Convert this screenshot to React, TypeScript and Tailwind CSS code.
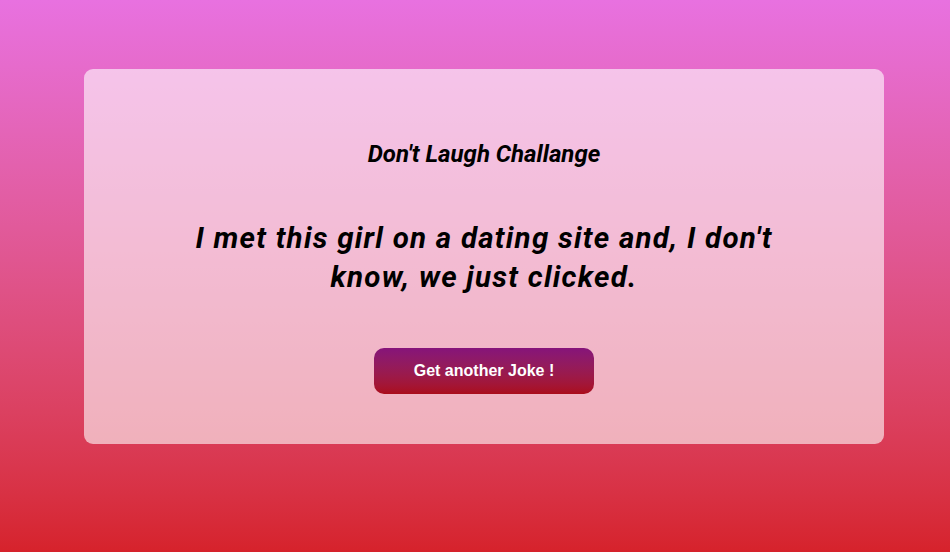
export default function App() {
  return (
    <div className="flex min-h-[552px] w-full items-start justify-start bg-gradient-to-b from-[#e871e0] to-[#d6222b] pl-[84px] pt-[69px] font-['Roboto',sans-serif]">
      <div className="flex h-[375px] w-[800px] flex-col items-center rounded-[9px] bg-white/60 px-[100px] pt-[71px]">
        <h2 className="text-[24px] font-bold italic leading-[28px] text-black">
          Don't Laugh Challange
        </h2>
        <p className="mt-[51px] text-center text-[29.5px] font-bold italic leading-[39px] tracking-[1.25px] text-black">
          I met this girl on a dating site and, I don't know, we just clicked.
        </p>
        <button className="mt-[51px] h-[46px] w-[220px] rounded-[10px] bg-gradient-to-b from-[#86137a] to-[#ab0c1a] font-['Liberation_Sans',Arial,sans-serif] text-[16px] font-bold text-white">
          Get another Joke !
        </button>
      </div>
    </div>
  );
}
